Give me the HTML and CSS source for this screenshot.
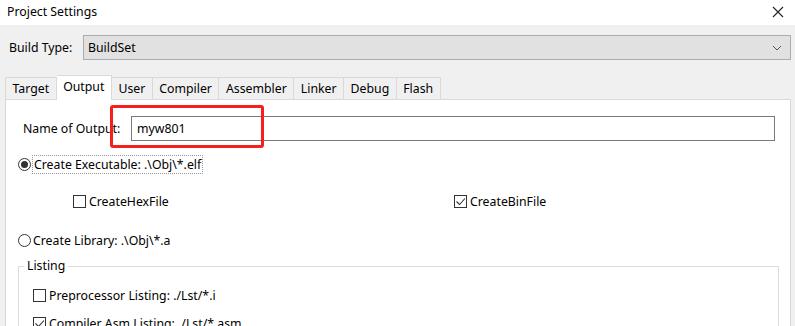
FILE: index.html
```html
<!DOCTYPE html>
<html lang="en">
<head>
  <meta charset="UTF-8" />
  <title>Project Settings</title>
  <link rel="stylesheet" href="styles.css">
</head>
<body>

<div class="titlebar">
  <span class="title">Project Settings</span>
  <svg class="close" width="12" height="12" viewBox="0 0 12 12">
    <path d="M1 1 L11 11 M11 1 L1 11" stroke="#222" stroke-width="1.1" fill="none"/>
  </svg>
</div>

<div class="dialog">
  <div class="build-row">
    <label>Build Type:</label>
    <div class="select">
      <span>BuildSet</span>
      <svg class="chevron" width="10" height="6" viewBox="0 0 10 6">
        <path d="M1 1 L5 5 L9 1" stroke="#555" stroke-width="1" fill="none"/>
      </svg>
    </div>
  </div>

  <div class="tabs">
    <div class="tab">Target</div>
    <div class="tab active">Output</div>
    <div class="tab">User</div>
    <div class="tab">Compiler</div>
    <div class="tab">Assembler</div>
    <div class="tab">Linker</div>
    <div class="tab">Debug</div>
    <div class="tab">Flash</div>
  </div>

  <div class="panel">
    <div class="name-row">
      <label>Name of Output:</label>
      <div class="textbox">myw801</div>
      <div class="highlight"></div>
    </div>

    <div class="radio-row exec">
      <span class="radio checked"></span>
      <span class="focus">Create Executable: .\Obj\*.elf</span>
    </div>

    <div class="check-row">
      <div class="check-item hex">
        <span class="checkbox"></span>
        <span>CreateHexFile</span>
      </div>
      <div class="check-item bin">
        <span class="checkbox checked">
          <svg width="11" height="11" viewBox="0 0 11 11"><path d="M1.5 5.5 L4.5 8.5 L10 2.5" stroke="#333" stroke-width="1.1" fill="none"/></svg>
        </span>
        <span>CreateBinFile</span>
      </div>
    </div>

    <div class="radio-row lib">
      <span class="radio"></span>
      <span>Create Library: .\Obj\*.a</span>
    </div>

    <fieldset class="listing">
      <legend>Listing</legend>
      <div class="check-item">
        <span class="checkbox"></span>
        <span>Preprocessor Listing: ./Lst/*.i</span>
      </div>
      <div class="check-item">
        <span class="checkbox checked">
          <svg width="11" height="11" viewBox="0 0 11 11"><path d="M1.5 5.5 L4.5 8.5 L10 2.5" stroke="#333" stroke-width="1.1" fill="none"/></svg>
        </span>
        <span>Compiler Asm Listing: ./Lst/*.asm</span>
      </div>
    </fieldset>
  </div>
</div>

</body>
</html>
```

FILE: styles.css
```css
body {
  margin: 0;
  font-family: "Noto Sans", "Noto Sans CJK SC", sans-serif;
  font-size: 12.3px;
  color: #000;
  background: #f0f0f0;
  overflow: hidden;
  height: 326px;
}

.titlebar {
  height: 25px;
  background: #fff;
  display: flex;
  align-items: center;
  justify-content: space-between;
  padding: 0 11px 2px 7px;
  box-sizing: border-box;
}

.dialog {
  padding: 10px 4px 0 5px;
}

.build-row {
  display: flex;
  align-items: center;
  height: 25px;
}

.build-row label {
  width: 78px;
  padding-left: 4px;
  box-sizing: border-box;
}

.select {
  flex: 1;
  height: 25px;
  box-sizing: border-box;
  background: #e1e1e1;
  border: 1px solid #adadad;
  display: flex;
  align-items: center;
  justify-content: space-between;
  padding: 0 8px 0 4px;
}

.tabs {
  display: flex;
  align-items: flex-end;
  margin-top: 15px;
  height: 24px;
  position: relative;
  z-index: 1;
}

.tab {
  height: 22px;
  box-sizing: border-box;
  border: 1px solid #d9d9d9;
  border-bottom: none;
  border-left: none;
  padding: 0 6.5px;
  display: flex;
  align-items: center;
  background: #f0f0f0;
}

.tab:first-child {
  border-left: 1px solid #d9d9d9;
}

.tab.active {
  height: 25px;
  background: #fff;
  margin-bottom: -1px;
  padding: 0 6.5px 3px;
}

.panel {
  background: #fff;
  border: 1px solid #d9d9d9;
  height: 240px;
  padding-top: 16px;
  box-sizing: border-box;
}

.name-row {
  display: flex;
  align-items: center;
  position: relative;
  padding-left: 17px;
  margin-right: 15px;
}

.name-row label {
  width: 108px;
}

.textbox {
  flex: 1;
  height: 25px;
  box-sizing: border-box;
  border: 1px solid #7a7a7a;
  display: flex;
  align-items: center;
  padding-left: 5px;
}

.highlight {
  position: absolute;
  left: 104px;
  top: -11px;
  width: 154px;
  height: 43px;
  box-sizing: border-box;
  border: 3px solid #f5201e;
  border-radius: 3px;
}

.radio-row {
  display: flex;
  align-items: center;
  height: 20px;
  padding-left: 12px;
  gap: 2px;
}

.exec {
  margin-top: 13px;
}

.lib {
  margin-top: 19px;
}

.radio {
  width: 13px;
  height: 13px;
  box-sizing: border-box;
  border: 1px solid #333;
  border-radius: 50%;
  background: #fff;
  display: flex;
  align-items: center;
  justify-content: center;
}

.radio.checked::after {
  content: "";
  width: 7px;
  height: 7px;
  border-radius: 50%;
  background: #333;
}

.focus {
  outline: 1px dotted #999;
  padding: 0 1px;
}

.check-row {
  display: flex;
  height: 20px;
  margin-top: 17px;
}

.check-item {
  display: flex;
  align-items: center;
  gap: 3px;
  height: 20px;
}

.hex {
  margin-left: 67px;
  width: 381px;
}

.checkbox {
  width: 13px;
  height: 13px;
  box-sizing: border-box;
  border: 1px solid #333;
  background: #fff;
  display: flex;
  align-items: center;
  justify-content: center;
}

.checkbox svg {
  flex: none;
}

.listing {
  margin: 8px 11px 0 12px;
  padding: 11px 14px 0;
  border: 1px solid #dcdcdc;
  display: flex;
  flex-direction: column;
  gap: 8px;
}

.listing legend {
  padding: 0 3px;
  margin-left: -9px;
  line-height: 16px;
}
```
